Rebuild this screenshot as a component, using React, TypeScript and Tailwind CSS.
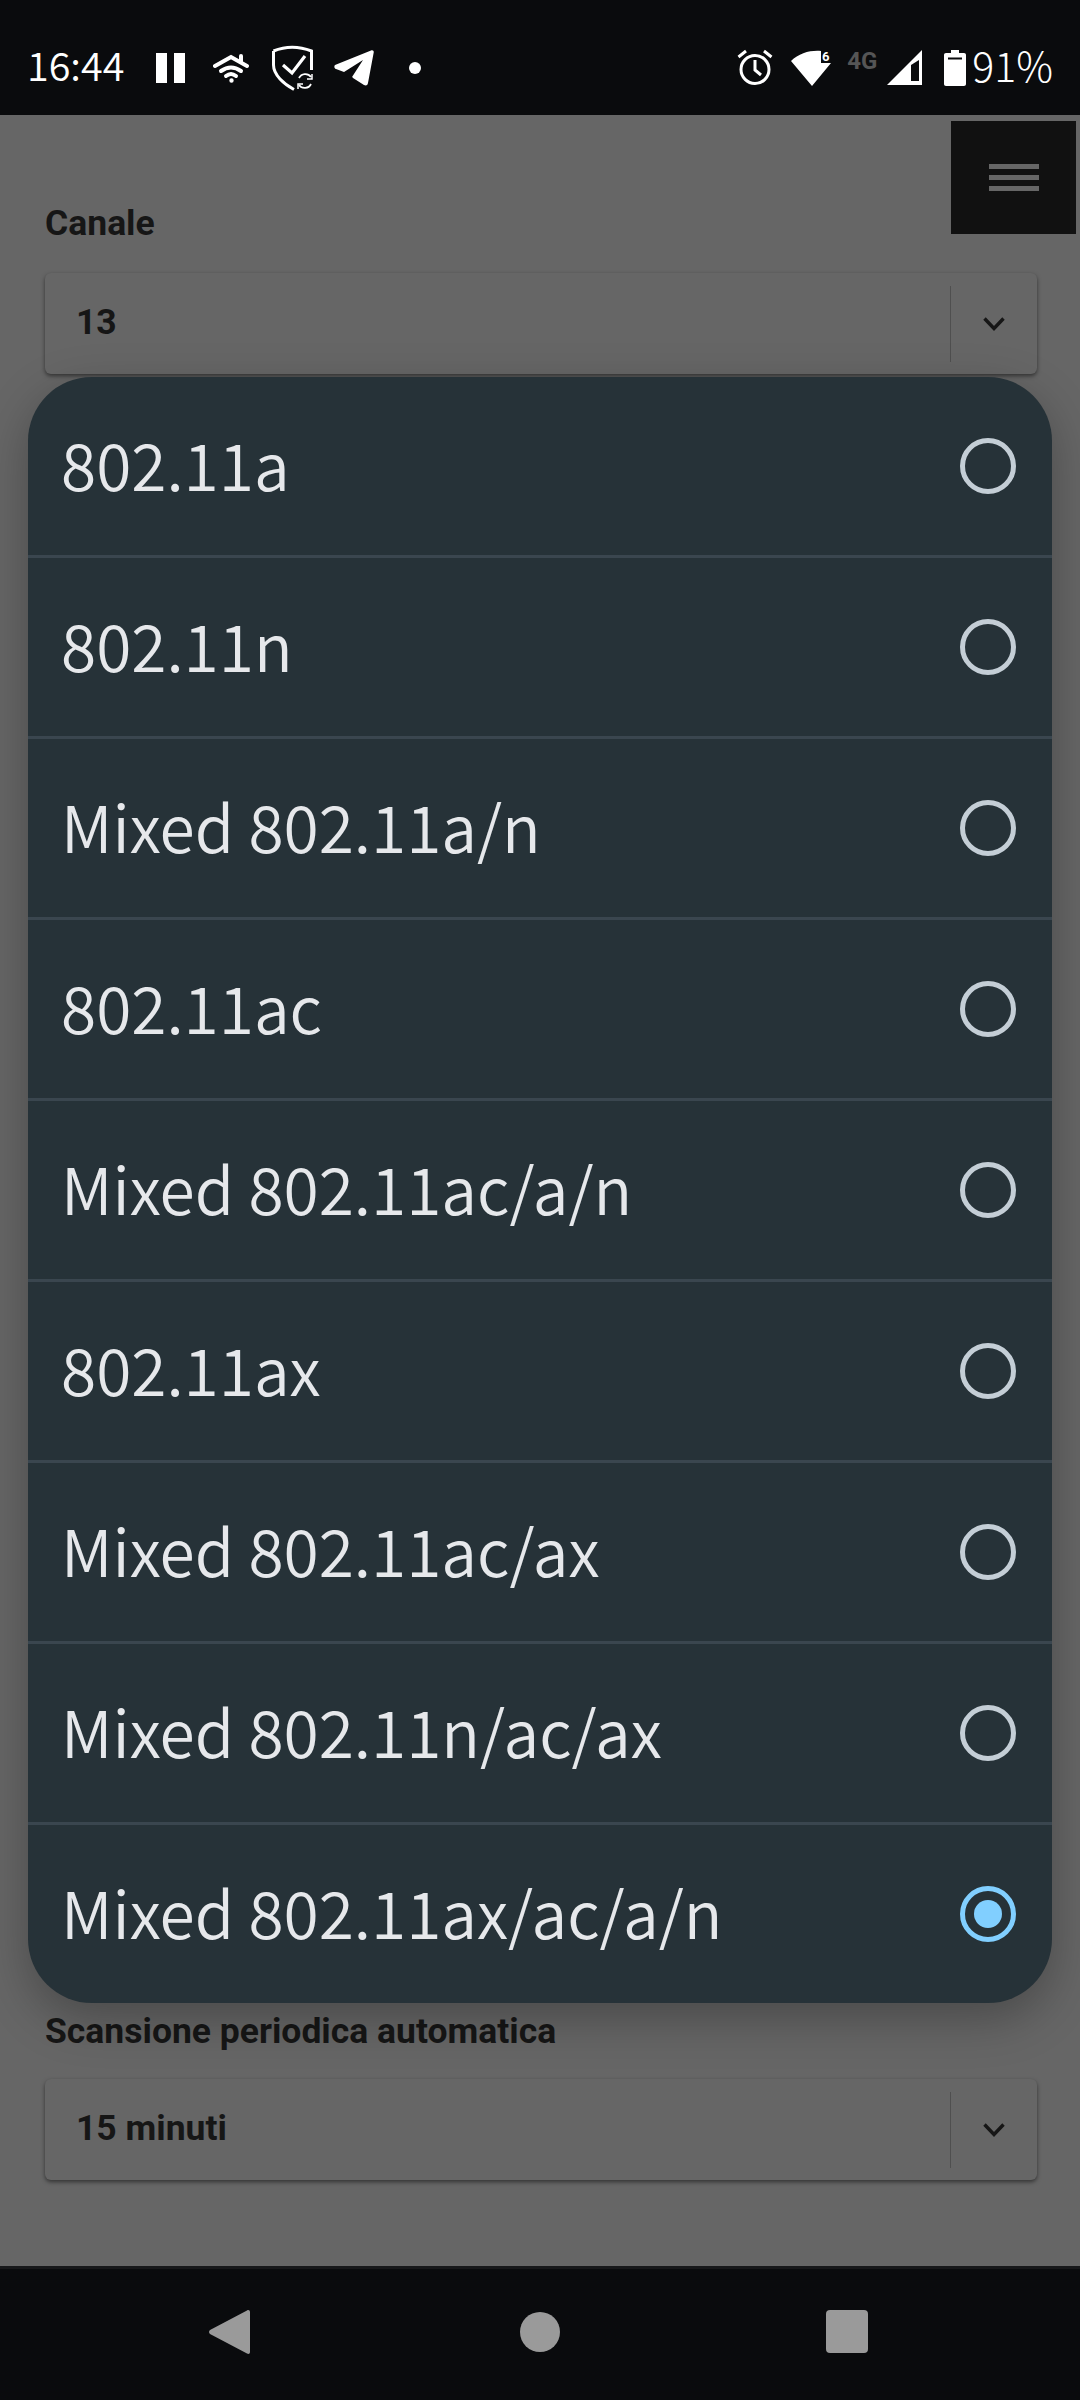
import React from "react";

const options = [
  "802.11a",
  "802.11n",
  "Mixed 802.11a/n",
  "802.11ac",
  "Mixed 802.11ac/a/n",
  "802.11ax",
  "Mixed 802.11ac/ax",
  "Mixed 802.11n/ac/ax",
  "Mixed 802.11ax/ac/a/n",
];

function Select({ value }: { value: string }) {
  return (
    <div className="flex h-[101px] w-[992px] items-center rounded-[6px] bg-[#666666] shadow-[0_2px_4px_rgba(0,0,0,0.5)]">
      <div className="flex-1 pb-[2px] pl-[31px] text-[35.500px] font-bold text-[#161616]">{value}</div>
      <div className="flex h-[76px] w-[87px] items-center justify-center border-l border-[#4f4f4f]">
        <svg width="22" height="14" viewBox="0 0 22 14" fill="none" stroke="#161616" strokeWidth="3.400">
          <path d="M1.500 1.500 11 11.500l9.500-10" />
        </svg>
      </div>
    </div>
  );
}

function Radio({ selected }: { selected: boolean }) {
  return selected ? (
    <div className="flex h-[56px] w-[56px] items-center justify-center rounded-full border-[5px] border-[#81cfff]">
      <div className="h-[28px] w-[28px] rounded-full bg-[#81cfff]" />
    </div>
  ) : (
    <div className="h-[56px] w-[56px] rounded-full border-[5px] border-[#c4ced6]" />
  );
}

function StatusBar() {
  return (
    <div className="flex h-[115px] items-center justify-between bg-[#0a0b0d] pt-[20px] pl-[27px] pr-[27px] text-white">
      <div className="flex items-center">
        <span className="w-[100px] pb-[7px] text-[39.500px] leading-none font-[350] [font-family:'Noto_Sans_CJK_SC',sans-serif]">16:44</span>
        <svg className="ml-[29px]" width="29" height="30" viewBox="0 0 29 30" fill="#fff">
          <rect x="0" y="0" width="11" height="30" />
          <rect x="18" y="0" width="11" height="30" />
        </svg>
        <svg className="ml-[28px]" width="37" height="30" viewBox="0 0 37 30" fill="none" stroke="#fff" strokeWidth="4" strokeLinecap="round">
          <path d="M2 13 18 4l16 9" />
          <path d="M28 3v6" />
          <path d="M8 18q10-7 20 0" />
          <path d="M13 23q5-4 10 0" />
          <circle cx="18.500" cy="27.500" r="1.400" fill="#fff" strokeWidth="1.600" />
        </svg>
        <svg className="ml-[22px]" width="42" height="46" viewBox="0 0 42 46" fill="none" stroke="#fff">
          <path d="M1.500 6Q20-1.500 39.500 6V25" strokeWidth="3" />
          <path d="M1.500 6V20C1.500 30 12 39 22 44.500" strokeWidth="3" />
          <path d="M11 20l9 8L33 11" strokeWidth="3.200" />
          <path d="M27 33a7 7 0 0 1 12-1M39 39a7 7 0 0 1-12 1" strokeWidth="1.800" />
          <path d="M40 29v5h-5M26 44v-5h5" strokeWidth="1.500" />
        </svg>
        <svg className="ml-[20px]" width="40" height="36" viewBox="0 0 40 36" fill="#fff">
          <path d="M1 15 37 .5c2-.7 3 .5 2.700 2L34 33c-.4 2.500-2.300 3-4 2l-11-7c-1-.7-1-1.600 0-2.500L29 10 10 22 2 19c-2-.8-2-3 -1-4z" />
        </svg>
        <span className="ml-[35px] h-[12px] w-[12px] rounded-full bg-white" />
      </div>
      <div className="flex items-center">
        <svg width="36" height="37" viewBox="0 0 36 37" fill="none" stroke="#fff">
          <circle cx="18" cy="20.500" r="14" strokeWidth="3" />
          <path d="M18 11v10l6 5" strokeWidth="3" />
          <path d="M1.500 8 9 2M34.500 8 27 2" strokeWidth="3" />
        </svg>
        <svg className="ml-[18px]" width="41" height="36" viewBox="0 0 41 36" fill="#fff">
          <path d="M0 11C8 3 20 0 30 1v12h10L21 36z" />
          <text x="31" y="11" fontSize="13" fontWeight="700" fontFamily="Roboto, sans-serif" fill="#fff">6</text>
        </svg>
        <span className="ml-[15px] -translate-y-[7px] text-[24px] leading-none font-bold text-[#555555] [font-family:Roboto,sans-serif]">4G</span>
        <svg className="ml-[10px]" width="35" height="35" viewBox="0 0 35 35">
          <path d="M35 0v35H0z" fill="#fff" />
          <path d="M24 15v16h8V10z" fill="#0a0b0d" />
        </svg>
        <svg className="ml-[22px]" width="22" height="36" viewBox="0 0 22 36" fill="#fff">
          <path d="M7 0h8v3h5c1.200 0 2 .8 2 2v29c0 1.200-.8 2-2 2H2c-1.200 0-2-.8-2-2V5c0-1.200.8-2 2-2h5z" />
          <rect x="4" y="7.500" width="14" height="2" fill="#0a0b0d" />
        </svg>
        <span className="ml-[6px] pb-[7px] text-[41px] leading-none font-light [font-family:'Noto_Sans_CJK_SC',sans-serif]">91%</span>
      </div>
    </div>
  );
}

function NavBar() {
  return (
    <div className="flex h-[134px] items-center border-t-[3px] border-[#17181a] bg-[#0a0b0d] pb-[6px]">
      <svg className="ml-[209px]" width="41" height="44" viewBox="0 0 41 44" fill="#9a9a9a">
        <path d="M38 .5c1.500-1 3-.3 3 1.500v40c0 1.800-1.500 2.500-3 1.500L1 24c-1.300-1-1.300-3 0-4z" />
      </svg>
      <div className="ml-[270px] h-[40px] w-[40px] rounded-full bg-[#9a9a9a]" />
      <div className="ml-[266px] h-[43px] w-[42px] rounded-[4px] bg-[#9a9a9a]" />
    </div>
  );
}

export default function App() {
  return (
    <div className="flex h-[2400px] w-[1080px] flex-col bg-[#666666] [font-family:Roboto,sans-serif]">
      <StatusBar />
      <main className="relative flex flex-1 flex-col justify-between pb-[86px] pl-[45px]">
        <div className="pt-[90px]">
          <div className="text-[35.500px] leading-[36px] font-bold text-[#161616]">Canale</div>
          <div className="mt-[32px]">
            <Select value="13" />
          </div>
        </div>
        <div>
          <div className="text-[35.500px] leading-[36px] font-bold text-[#161616]">Scansione periodica automatica</div>
          <div className="mt-[30px]">
            <Select value="15 minuti" />
          </div>
        </div>

        <div className="absolute top-[6px] right-[4px] flex h-[113px] w-[125px] flex-col items-center justify-center gap-[6px] bg-[#111111]">
          <span className="h-[5px] w-[50px] bg-[#666666]" />
          <span className="h-[5px] w-[50px] bg-[#666666]" />
          <span className="h-[5px] w-[50px] bg-[#666666]" />
        </div>

        <div className="absolute top-[262px] left-[28px] w-[1024px] overflow-hidden rounded-[64px] bg-[#263238] shadow-[0_16px_48px_rgba(0,0,0,0.28)]">
          {options.map((o, i) => (
            <div
              key={o}
              className="flex h-[181px] items-center justify-between border-b-[3px] border-[#3a464f] pr-[36px] pl-[33px] last:h-[178px] last:border-b-0"
            >
              <span className="pb-[6px] text-[64px] leading-none font-[350] text-[#e6e8eb] [font-family:'Noto_Sans_CJK_SC',sans-serif]">{o}</span>
              <Radio selected={i === options.length - 1} />
            </div>
          ))}
        </div>
      </main>
      <NavBar />
    </div>
  );
}
